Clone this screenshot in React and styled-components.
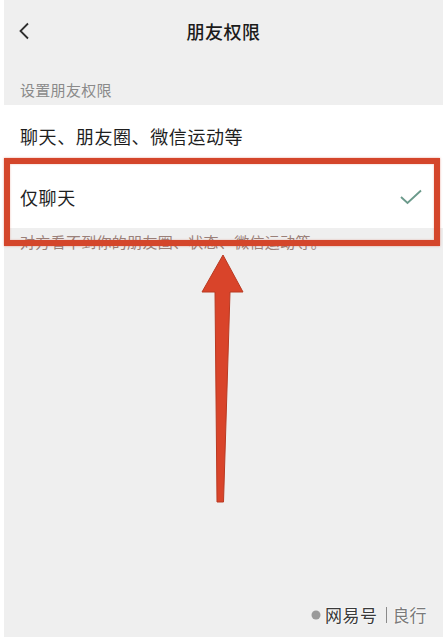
import React from "react";
import styled, { createGlobalStyle } from "styled-components";

const GlobalStyle = createGlobalStyle`
  html, body {
    margin: 0;
    padding: 0;
    background: #fff;
  }
  body {
    font-family: "Noto Sans CJK SC", "Noto Sans", sans-serif;
    -webkit-font-smoothing: antialiased;
  }
`;

const Page = styled.div`
  position: relative;
  width: 446px;
  height: 637px;
  padding: 0 3px 0 4px;
  box-sizing: border-box;
  background: #fff;
  overflow: hidden;
`;

const Screen = styled.div`
  height: 100%;
  background: #efefef;
  display: flex;
  flex-direction: column;
`;

const NavBar = styled.div`
  height: 62px;
  display: grid;
  grid-template-columns: 60px 1fr 60px;
  align-items: center;
`;

const BackButton = styled.div`
  padding-left: 14px;
  display: flex;
  align-items: center;
`;

const Title = styled.div`
  text-align: center;
  font-size: 18px;
  font-weight: 500;
  color: #1b1b1b;
  letter-spacing: 0.5px;
`;

const SectionLabel = styled.div`
  padding: 17px 16px 5px;
  font-size: 15px;
  line-height: 21px;
  color: #8a8a8a;
  letter-spacing: 0.3px;
`;

const List = styled.div`
  background: #fff;
`;

const Row = styled.div`
  height: 61.5px;
  display: flex;
  align-items: center;
  justify-content: space-between;
  padding: 0 21px 0 16px;
  font-size: 18px;
  color: #1e1e1e;
  letter-spacing: 0.6px;
`;

const Caption = styled.div`
  padding: 4px 16px 0;
  font-size: 15px;
  line-height: 20px;
  color: #9a8079;
  letter-spacing: 0.3px;
`;

const Highlight = styled.div`
  position: absolute;
  left: 4px;
  top: 158px;
  width: 436px;
  height: 88px;
  box-sizing: border-box;
  border: 6px solid #d4462b;
  box-shadow: 0 0 2px rgba(212, 70, 43, 0.5), inset 0 0 2px rgba(212, 70, 43, 0.4);
`;

const Arrow = styled.svg`
  position: absolute;
  left: 195px;
  top: 250px;
`;

const Watermark = styled.div`
  position: absolute;
  left: 311px;
  top: 604px;
  display: flex;
  align-items: center;
  gap: 4px;
  font-size: 17px;
  line-height: 22px;
  text-shadow: 0 0 2px #fff, 0 0 2px #fff;
`;

const Brand = styled.span`
  color: #3a3a3a;
  letter-spacing: 0.5px;
`;

const Divider = styled.span`
  width: 1px;
  height: 16px;
  background: #8a8a8a;
  margin: 0 2px 0 4px;
`;

const Author = styled.span`
  color: #7a7a7a;
`;

const ChevronLeft = () => (
  <svg width="12" height="18" viewBox="0 0 12 18">
    <path d="M10 1.5 L2.5 9 L10 16.5" fill="none" stroke="#2e2e2e" strokeWidth="1.8" />
  </svg>
);

const Check = () => (
  <svg width="22" height="16" viewBox="0 0 22 16">
    <path d="M1 8 L7.5 14 L21 1.5" fill="none" stroke="#6b9a8b" strokeWidth="1.9" />
  </svg>
);

const App = () => {
  return (
    <>
      <GlobalStyle />
      <Page>
        <Screen>
          <NavBar>
            <BackButton>
              <ChevronLeft />
            </BackButton>
            <Title>朋友权限</Title>
            <div />
          </NavBar>
          <SectionLabel>设置朋友权限</SectionLabel>
          <List>
            <Row>聊天、朋友圈、微信运动等</Row>
            <Row>
              仅聊天
              <Check />
            </Row>
          </List>
          <Caption>对方看不到你的朋友圈、状态、微信运动等。</Caption>
        </Screen>

        <Highlight />

        <Arrow width="55" height="256" viewBox="195 250 55 256">
          <polygon
            points="223,255 243,292 230,292 223.5,502 217,502 215,292 202,292"
            fill="#d9442a"
            stroke="#b93a22"
            strokeWidth="1"
            strokeLinejoin="round"
          />
        </Arrow>

        <Watermark>
          <svg width="10" height="10" viewBox="0 0 10 10">
            <circle cx="5" cy="5" r="4.5" fill="#9a9a9a" />
          </svg>
          <Brand>网易号</Brand>
          <Divider />
          <Author>良行</Author>
        </Watermark>
      </Page>
    </>
  );
};

export default App;
